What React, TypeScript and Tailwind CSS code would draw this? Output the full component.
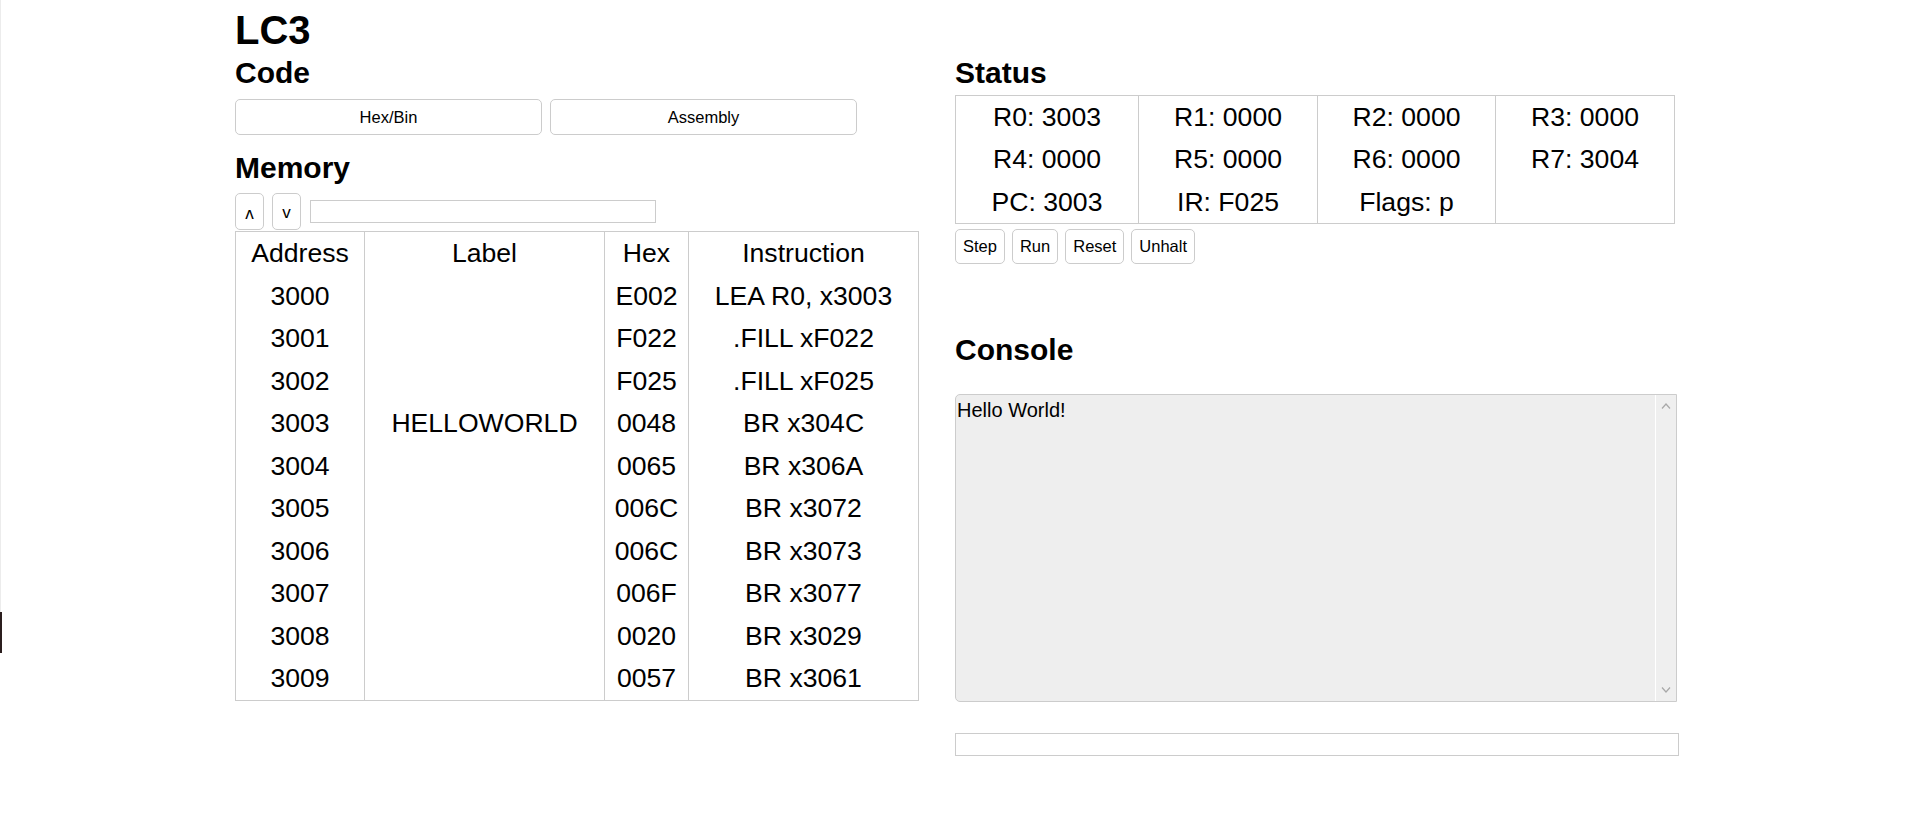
import { ReactNode } from 'react';

const memory = [
  { addr: '3000', label: '', hex: 'E002', instr: 'LEA R0, x3003' },
  { addr: '3001', label: '', hex: 'F022', instr: '.FILL xF022' },
  { addr: '3002', label: '', hex: 'F025', instr: '.FILL xF025' },
  { addr: '3003', label: 'HELLOWORLD', hex: '0048', instr: 'BR x304C' },
  { addr: '3004', label: '', hex: '0065', instr: 'BR x306A' },
  { addr: '3005', label: '', hex: '006C', instr: 'BR x3072' },
  { addr: '3006', label: '', hex: '006C', instr: 'BR x3073' },
  { addr: '3007', label: '', hex: '006F', instr: 'BR x3077' },
  { addr: '3008', label: '', hex: '0020', instr: 'BR x3029' },
  { addr: '3009', label: '', hex: '0057', instr: 'BR x3061' },
];

const registers = [
  ['R0: 3003', 'R1: 0000', 'R2: 0000', 'R3: 0000'],
  ['R4: 0000', 'R5: 0000', 'R6: 0000', 'R7: 3004'],
  ['PC: 3003', 'IR: F025', 'Flags: p', ''],
];

const Heading = ({ children, className = '' }: { children: ReactNode; className?: string }) => (
  <h2 className={`text-[30px] leading-[34px] font-bold text-black ${className}`}>{children}</h2>
);

const SmallButton = ({ children, className = '' }: { children: ReactNode; className?: string }) => (
  <button
    className={`bg-white border border-[#cccccc] rounded-[5px] text-[16.5px] leading-none text-black ${className}`}
  >
    {children}
  </button>
);

export default function App() {
  return (
    <div className="relative min-h-[818px] bg-white text-black font-['Liberation_Sans',Arial,sans-serif]">
      {/* window edge */}
      <div className="absolute left-0 top-0 w-px h-[612px] bg-[#ececec]" />
      <div className="absolute left-0 top-[612px] w-[2px] h-[41px] bg-[#2b1e1e]" />

      <div className="ml-[235px] pt-[7px]">
        <h1 className="text-[40px] leading-[46px] font-bold">LC3</h1>

        <div className="flex gap-[36px]">
          {/* left column */}
          <div className="w-[684px]">
            <Heading className="mt-[3px]">Code</Heading>
            <div className="flex gap-[8px] mt-[9px]">
              <SmallButton className="w-[307px] h-[36px]">Hex/Bin</SmallButton>
              <SmallButton className="w-[307px] h-[36px]">Assembly</SmallButton>
            </div>

            <Heading className="mt-[16px]">Memory</Heading>
            <div className="flex items-center gap-[8px] mt-[8px] h-[37px]">
              <SmallButton className="w-[29px] h-[37px] pt-[4px] text-[17px]">ʌ</SmallButton>
              <SmallButton className="w-[29px] h-[37px] pt-[1px] text-[17px]">v</SmallButton>
              <input className="w-[346px] h-[23px] border border-[#cccccc] outline-none ml-[1px]" />
            </div>

            <table className="mt-px border-collapse border border-[#cccccc] table-fixed w-[684px] text-[26.6px] text-center">
              <colgroup>
                <col className="w-[129px]" />
                <col className="w-[240px]" />
                <col className="w-[84px]" />
                <col />
              </colgroup>
              <thead>
                <tr>
                  <th className="font-normal leading-[42.5px] p-0 border-r border-[#cccccc]">Address</th>
                  <th className="font-normal leading-[42.5px] p-0 border-r border-[#cccccc]">Label</th>
                  <th className="font-normal leading-[42.5px] p-0 border-r border-[#cccccc]">Hex</th>
                  <th className="font-normal leading-[42.5px] p-0">Instruction</th>
                </tr>
              </thead>
              <tbody>
                {memory.map((row) => (
                  <tr key={row.addr}>
                    <td className="leading-[42.5px] p-0 border-r border-[#cccccc]">{row.addr}</td>
                    <td className="leading-[42.5px] p-0 border-r border-[#cccccc]">{row.label}</td>
                    <td className="leading-[42.5px] p-0 border-r border-[#cccccc]">{row.hex}</td>
                    <td className="leading-[42.5px] p-0">{row.instr}</td>
                  </tr>
                ))}
              </tbody>
            </table>
          </div>

          {/* right column */}
          <div className="w-[724px]">
            <Heading className="mt-[3px]">Status</Heading>
            <div className="mt-[5px] w-[720px] border border-[#cccccc] grid grid-cols-[183px_179px_178px_1fr] text-[26.6px] text-center">
              {[0, 1, 2, 3].map((col) => (
                <div key={col} className={col < 3 ? 'border-r border-[#cccccc]' : ''}>
                  {registers.map((r, i) => (
                    <div key={i} className="h-[42.33px] leading-[42.33px]">
                      {r[col]}
                    </div>
                  ))}
                </div>
              ))}
            </div>
            <div className="flex gap-[7px] mt-[5px]">
              <SmallButton className="h-[35px] px-[7px]">Step</SmallButton>
              <SmallButton className="h-[35px] px-[7px]">Run</SmallButton>
              <SmallButton className="h-[35px] px-[7px]">Reset</SmallButton>
              <SmallButton className="h-[35px] px-[7px]">Unhalt</SmallButton>
            </div>

            <Heading className="mt-[69px]">Console</Heading>
            <div className="mt-[27px] w-[722px] h-[308px] flex border border-[#cccccc] rounded-l-[5px] bg-[#eeeeee]">
              <div className="flex-1 text-[20px] leading-[23px] pt-[4px] pl-px">Hello World!</div>
              <div className="w-[21px] border-l border-white bg-[#efefef] flex flex-col justify-between items-center py-[8px]">
                <svg width="10" height="6" viewBox="0 0 10 6">
                  <polyline points="1,5.5 5,1 9,5.5" fill="none" stroke="#a8a8a8" strokeWidth="1.2" />
                </svg>
                <svg width="10" height="6" viewBox="0 0 10 6">
                  <polyline points="1,0.5 5,5 9,0.5" fill="none" stroke="#a8a8a8" strokeWidth="1.2" />
                </svg>
              </div>
            </div>
            <input className="block mt-[31px] w-[724px] h-[23px] border border-[#cccccc] outline-none" />
          </div>
        </div>
      </div>
    </div>
  );
}
